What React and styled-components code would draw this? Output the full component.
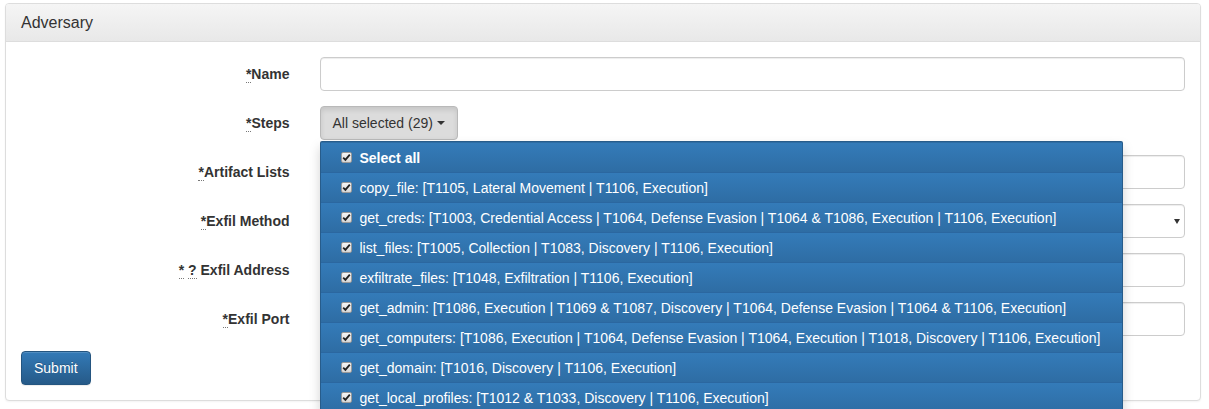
import React from "react";
import styled, { createGlobalStyle } from "styled-components";

const Global = createGlobalStyle`
  html { overflow: hidden; height: 100%; }
  html, body { margin: 0; padding: 0; background: #fff; }
  body {
    min-height: 100vh;
    font-family: "Liberation Sans", Arial, sans-serif;
    font-size: 14px;
    line-height: 1.42857143;
    color: #333;
  }
  * { box-sizing: border-box; }
`;

const Page = styled.div`
  min-height: 100vh;
  padding: 3px 8px 0 5px;
`;

const Panel = styled.div`
  border: 1px solid #ddd;
  border-radius: 4px;
  background: #fff;
  box-shadow: 0 1px 2px rgba(0, 0, 0, 0.05);
`;

const PanelHeading = styled.div`
  padding: 10px 15px;
  font-size: 16px;
  line-height: 17px;
  color: #333;
  background-image: linear-gradient(to bottom, #f5f5f5 0, #e8e8e8 100%);
  border-bottom: 1px solid #ddd;
  border-radius: 3px 3px 0 0;
`;

const PanelBody = styled.div`
  padding: 15px;
`;

const FormGroup = styled.div`
  display: flex;
  margin: 0 -15px 15px;
`;

const Label = styled.label`
  width: 25%;
  padding: 7px 15px 0;
  text-align: right;
  font-weight: bold;
  line-height: 20px;
`;

const Control = styled.div`
  width: 75%;
  padding: 0 15px;
  position: relative;
`;

const Abbr = styled.abbr`
  text-decoration: none;
  border-bottom: 1px dotted #777;
  cursor: help;
`;

const Input = styled.input`
  display: block;
  width: 100%;
  height: 34px;
  padding: 6px 12px;
  font: inherit;
  color: #555;
  background: #fff;
  border: 1px solid #ccc;
  border-radius: 4px;
  box-shadow: inset 0 1px 1px rgba(0, 0, 0, 0.075);
`;

const SelectWrap = styled.div`
  position: relative;
  &::after {
    content: "";
    position: absolute;
    right: 5px;
    top: 15px;
    border-left: 3px solid transparent;
    border-right: 3px solid transparent;
    border-top: 5px solid #333;
  }
`;

const Select = styled.select`
  display: block;
  width: 100%;
  height: 34px;
  padding: 6px 12px;
  font: inherit;
  color: #555;
  background: #fff;
  border: 1px solid #ccc;
  border-radius: 4px;
  appearance: none;
  box-shadow: inset 0 1px 1px rgba(0, 0, 0, 0.075);
`;

const BtnGroup = styled.div`
  position: relative;
  display: inline-block;
`;

const ToggleButton = styled.button`
  display: inline-flex;
  align-items: center;
  gap: 4px;
  height: 34px;
  padding: 6px 12px;
  font: inherit;
  color: #333;
  background: #dcdcdc;
  border: 1px solid #b9b9b9;
  border-radius: 4px;
  box-shadow: inset 0 3px 5px rgba(0, 0, 0, 0.1);
`;

const Caret = styled.span`
  display: inline-block;
  width: 0;
  height: 0;
  border-top: 4px solid #333;
  border-left: 4px solid transparent;
  border-right: 4px solid transparent;
`;

const Menu = styled.ul`
  position: absolute;
  top: 100%;
  left: 0;
  z-index: 1000;
  margin: 1px 0 0;
  padding: 1px 0 0;
  list-style: none;
  background: #2e6da4;
  border: 1px solid rgba(0, 0, 0, 0.15);
  border-radius: 2px;
  box-shadow: 0 6px 12px rgba(0, 0, 0, 0.175);
  white-space: nowrap;
`;

const Item = styled.li`
  display: flex;
  align-items: center;
  gap: 8px;
  height: 30px;
  padding: 0 22px 0 20px;
  color: #fff;
  font-weight: ${(p) => (p.$bold ? "bold" : "normal")};
  background-image: linear-gradient(to bottom, #347bb9 0, #2e6da4 100%);
  border-bottom: 1px solid #2b67a0;
`;

const Check = styled.span`
  display: inline-flex;
  align-items: center;
  justify-content: center;
  width: 11px;
  height: 11px;
  background: linear-gradient(#f4f4f4, #d8d8d8);
  border: 1px solid #9a9a9a;
  border-radius: 2px;
  flex: none;
`;

const SubmitButton = styled.button`
  height: 34px;
  padding: 6px 12px;
  font: inherit;
  color: #fff;
  background-image: linear-gradient(to bottom, #337ab7 0, #265a88 100%);
  border: 1px solid #245580;
  border-radius: 4px;
  box-shadow: inset 0 1px 0 rgba(255, 255, 255, 0.15), 0 1px 1px rgba(0, 0, 0, 0.075);
  text-shadow: 0 -1px 0 rgba(0, 0, 0, 0.2);
`;

const steps = [
  "copy_file: [T1105, Lateral Movement | T1106, Execution]",
  "get_creds: [T1003, Credential Access | T1064, Defense Evasion | T1064 & T1086, Execution | T1106, Execution]",
  "list_files: [T1005, Collection | T1083, Discovery | T1106, Execution]",
  "exfiltrate_files: [T1048, Exfiltration | T1106, Execution]",
  "get_admin: [T1086, Execution | T1069 & T1087, Discovery | T1064, Defense Evasion | T1064 & T1106, Execution]",
  "get_computers: [T1086, Execution | T1064, Defense Evasion | T1064, Execution | T1018, Discovery | T1106, Execution]",
  "get_domain: [T1016, Discovery | T1106, Execution]",
  "get_local_profiles: [T1012 & T1033, Discovery | T1106, Execution]",
];

const CheckMark = () => (
  <Check>
    <svg width="9" height="9" viewBox="0 0 9 9">
      <path d="M1.2 4.6 L3.4 6.9 L7.8 1.6" fill="none" stroke="#222" strokeWidth="1.8" />
    </svg>
  </Check>
);

const Req = () => <Abbr title="required">*</Abbr>;

export default function App() {
  return (
    <>
      <Global />
      <Page>
        <Panel>
          <PanelHeading>Adversary</PanelHeading>
          <PanelBody>
            <FormGroup>
              <Label><Req />Name</Label>
              <Control><Input type="text" /></Control>
            </FormGroup>
            <FormGroup>
              <Label><Req />Steps</Label>
              <Control>
                <BtnGroup>
                  <ToggleButton type="button">
                    All selected (29) <Caret />
                  </ToggleButton>
                  <Menu>
                    <Item $bold><CheckMark />Select all</Item>
                    {steps.map((s) => (
                      <Item key={s}><CheckMark />{s}</Item>
                    ))}
                  </Menu>
                </BtnGroup>
              </Control>
            </FormGroup>
            <FormGroup>
              <Label><Req />Artifact Lists</Label>
              <Control><Input type="text" /></Control>
            </FormGroup>
            <FormGroup>
              <Label><Req />Exfil Method</Label>
              <Control>
                <SelectWrap>
                  <Select><option></option></Select>
                </SelectWrap>
              </Control>
            </FormGroup>
            <FormGroup>
              <Label><Req /> <Abbr title="help">?</Abbr> Exfil Address</Label>
              <Control><Input type="text" /></Control>
            </FormGroup>
            <FormGroup>
              <Label><Req />Exfil Port</Label>
              <Control><Input type="text" /></Control>
            </FormGroup>
            <SubmitButton type="button">Submit</SubmitButton>
          </PanelBody>
        </Panel>
      </Page>
    </>
  );
}
